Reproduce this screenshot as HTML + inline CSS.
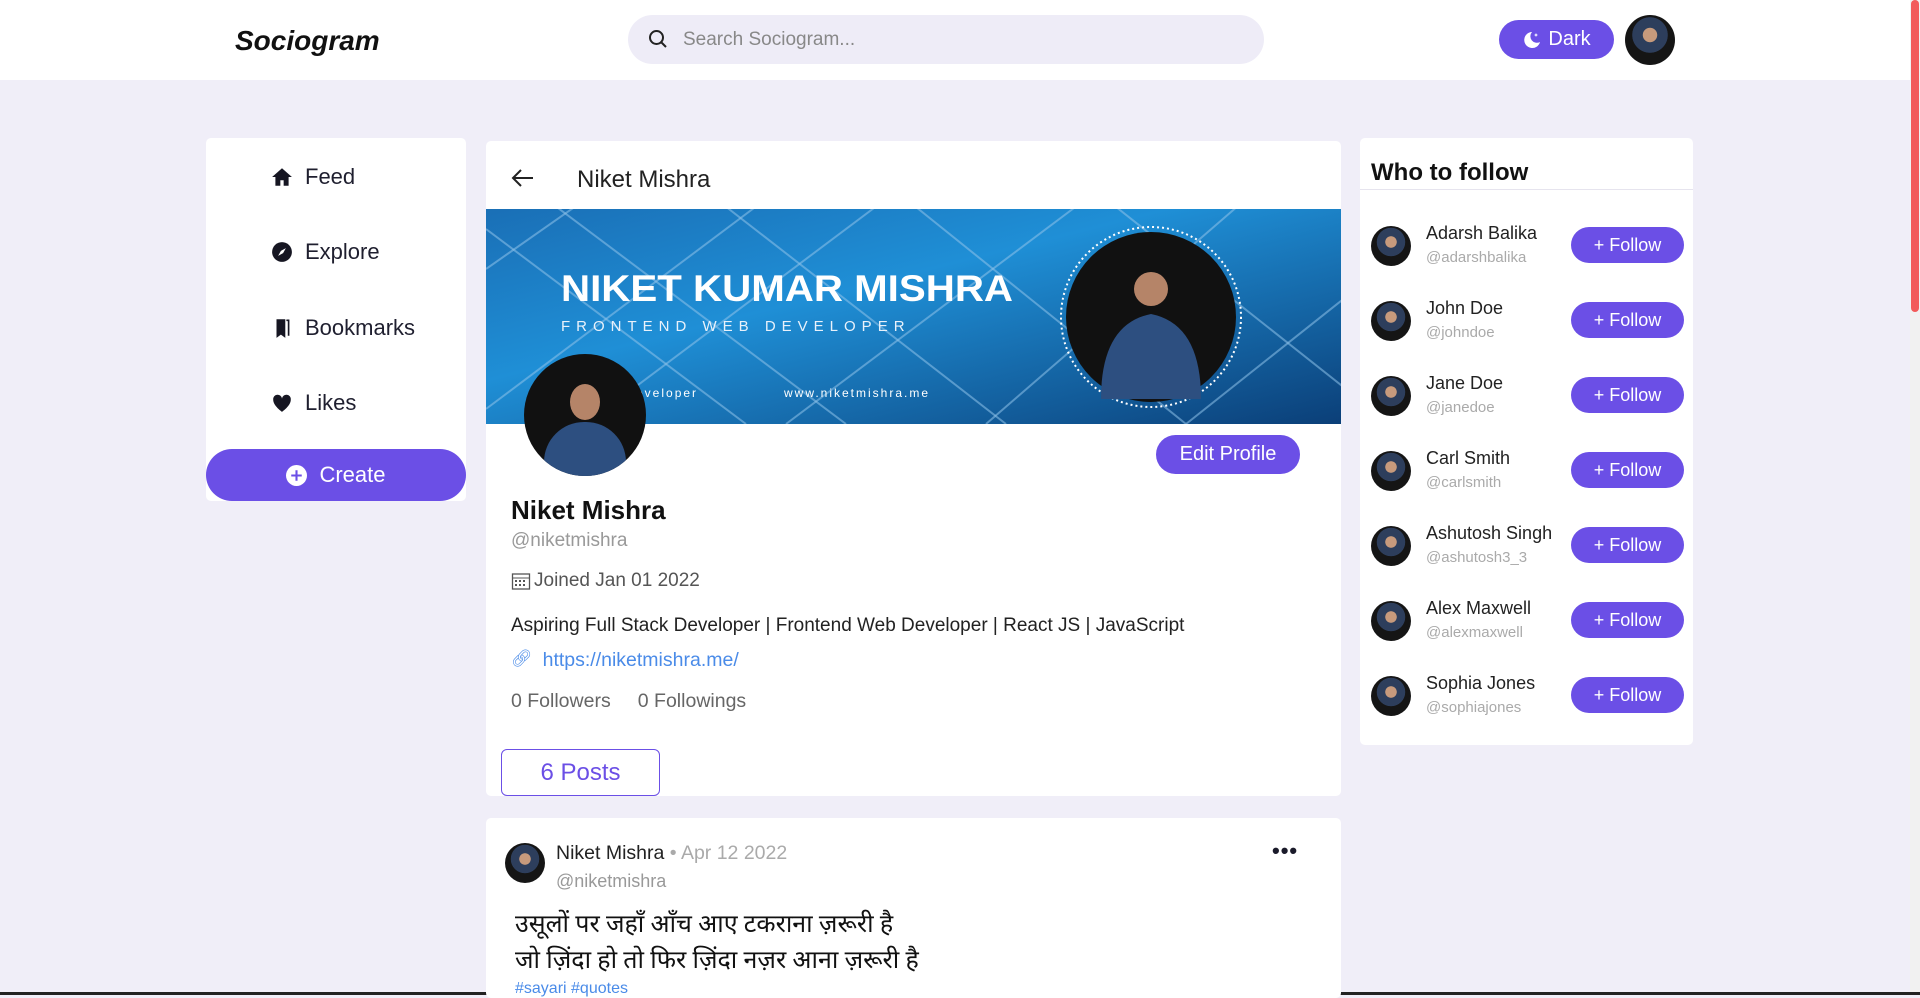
<!DOCTYPE html>
<html><head><meta charset="utf-8"><style>
*{box-sizing:border-box;margin:0;padding:0}
body{width:1920px;height:995px;overflow:hidden;background:#f0eef8;font-family:"Liberation Sans","Noto Sans CJK SC",sans-serif;color:#1a1a2a;position:relative}
.abs{position:absolute}
.hdr{left:0;top:0;width:1910px;height:80px;background:#fff}
.logo{left:235px;top:25px;font-size:28px;font-weight:bold;font-style:italic;color:#111}
.search{left:628px;top:15px;width:636px;height:49px;background:#eeecf7;border-radius:25px}
.search span{position:absolute;left:55px;top:14px;font-size:19px;color:#888}
.btnp{background:#6b4fe6;color:#fff;border-radius:30px;display:flex;align-items:center;justify-content:center}
.card{background:#fff;border-radius:5px}
.nav{left:271px;font-size:22px;color:#1f1f2f;display:flex;align-items:center;gap:12px}
.nav svg{width:22px;height:22px}
.av{border-radius:50%;background:radial-gradient(circle at 50% 40%,#c79a7c 0 18%,#2d3e5c 19% 45%,#151515 46%);}
.grey{color:#999}
.row{left:1371px;width:320px;height:50px}
.row .a{position:absolute;left:0;top:5px;width:40px;height:40px}
.row .n{position:absolute;left:55px;top:2px;font-size:18px;color:#222}
.row .h{position:absolute;left:55px;top:28px;font-size:15px;color:#aaa}
.row .f{position:absolute;left:200px;top:6px;width:113px;height:36px;font-size:18px}
</style></head><body>
<div class="abs hdr"></div>
<div class="abs logo">Sociogram</div>
<div class="abs search"><svg style="position:absolute;left:20px;top:14px" width="20" height="20" viewBox="0 0 20 20"><circle cx="8.5" cy="8.5" r="6.5" fill="none" stroke="#222" stroke-width="2"/><path d="M13.5 13.5L18 18" stroke="#222" stroke-width="2"/></svg><span>Search Sociogram...</span></div>
<div class="abs btnp" style="left:1499px;top:20px;width:115px;height:39px;font-size:20px;gap:6px"><svg width="20" height="20" viewBox="0 0 20 20"><path d="M10 2a8 8 0 1 0 8 10A6.5 6.5 0 0 1 10 2z" fill="#fff"/><path d="M14 3l.6 1.4L16 5l-1.4.6L14 7l-.6-1.4L12 5l1.4-.6z" fill="#fff"/></svg>Dark</div>
<div class="abs av" style="left:1625px;top:15px;width:50px;height:50px"></div>
<div class="abs" style="left:1910px;top:0;width:10px;height:995px;background:#f1f1f1"></div>
<div class="abs" style="left:1911px;top:0;width:8px;height:312px;background:#f25a5a;border-radius:4px"></div>
<div class="abs" style="left:0;top:992px;width:1920px;height:3px;background:#222"></div>

<div class="abs card" style="left:206px;top:138px;width:260px;height:363px"></div>
<div class="abs nav" style="top:164px"><svg viewBox="0 0 20 20"><path d="M10 2L1 10h3v8h4.5v-5h3v5H16v-8h3z" fill="#161622"/></svg><span>Feed</span></div>
<div class="abs nav" style="top:239px"><svg viewBox="0 0 20 20"><circle cx="10" cy="10" r="9" fill="#161622"/><path d="M13.5 6.5L11 11 6.5 13.5 9 9z" fill="#fff"/></svg><span>Explore</span></div>
<div class="abs nav" style="top:315px"><svg viewBox="0 0 20 20"><path d="M5 2h8v17l-4-3-4 3z" fill="#161622"/><path d="M14 3h2v14" stroke="#161622" stroke-width="1.5" fill="none"/></svg><span>Bookmarks</span></div>
<div class="abs nav" style="top:390px"><svg viewBox="0 0 20 20"><path d="M10 18S2 12.5 2 7a4 4 0 0 1 8-1 4 4 0 0 1 8 1c0 5.5-8 11-8 11z" fill="#161622"/></svg><span>Likes</span></div>
<div class="abs btnp" style="left:206px;top:449px;width:260px;height:52px;font-size:22px;gap:12px"><svg width="21" height="21" viewBox="0 0 20 20"><circle cx="10" cy="10" r="10" fill="#fff"/><path d="M10 5v10M5 10h10" stroke="#6b4fe6" stroke-width="2"/></svg>Create</div>

<div class="abs card" style="left:486px;top:141px;width:855px;height:655px"></div>
<svg class="abs" style="left:511px;top:167px" width="24" height="22" viewBox="0 0 24 22"><path d="M22 11H3M10 3l-8 8 8 8" stroke="#222" stroke-width="2" fill="none"/></svg>
<div class="abs" style="left:577px;top:166px;font-size:24px;color:#222">Niket Mishra</div>
<svg class="abs" style="left:486px;top:209px" width="855" height="215" viewBox="0 0 855 215">
<defs><linearGradient id="bg" x1="0" y1="0" x2="1" y2="1"><stop offset="0" stop-color="#1a6fb6"/><stop offset=".4" stop-color="#1f8fd6"/><stop offset="1" stop-color="#0b3f78"/></linearGradient></defs>
<rect width="855" height="215" fill="url(#bg)"/>
<g stroke="#8fc3ea" stroke-opacity=".55" stroke-width="2" fill="none">
<path d="M0 60L100 -10M0 200L280 -10M100 215L400 -10M300 215L600 -10M500 215L760 -10M700 215L870 80"/>
<path d="M0 20L260 215M60 -10L360 215M230 -10L520 215M420 -10L700 215M620 -10L860 180"/></g>
<text x="75" y="92" fill="#fff" font-size="37" font-weight="bold" textLength="452" lengthAdjust="spacingAndGlyphs" font-family="Liberation Sans">NIKET KUMAR MISHRA</text>
<text x="75" y="122" fill="#e8f1fb" font-size="15" letter-spacing="6" font-family="Liberation Sans">FRONTEND WEB DEVELOPER</text>
<text x="150" y="188" fill="#fff" font-size="12" letter-spacing="2" font-family="Liberation Sans">eveloper</text>
<text x="298" y="188" fill="#fff" font-size="12" letter-spacing="2" font-family="Liberation Sans">www.niketmishra.me</text>
<circle cx="665" cy="108" r="90" fill="none" stroke="#fff" stroke-width="2" stroke-dasharray="2 3"/>
<circle cx="665" cy="108" r="85" fill="#111"/>
<circle cx="665" cy="80" r="17" fill="#b58468"/>
<path d="M615 190q0-75 50-85q50 10 50 85z" fill="#2d4f80"/>
</svg>
<div class="abs" style="left:524px;top:354px;width:122px;height:122px;border-radius:50%;background:#111;overflow:hidden"><div style="position:absolute;left:46px;top:30px;width:30px;height:36px;border-radius:50%;background:#b58468"></div><div style="position:absolute;left:20px;top:68px;width:82px;height:70px;border-radius:40px 40px 0 0;background:#2d4f80"></div></div>
<div class="abs btnp" style="left:1156px;top:435px;width:144px;height:39px;font-size:20px">Edit Profile</div>
<div class="abs" style="left:511px;top:495px;font-size:26px;font-weight:bold;color:#111">Niket Mishra</div>
<div class="abs grey" style="left:511px;top:530px;font-size:19px">@niketmishra</div>
<div class="abs" style="left:511px;top:570px;font-size:19px;color:#555;display:flex;align-items:center;gap:3px"><svg width="20" height="20" viewBox="0 0 20 20"><rect x="1.5" y="3" width="17" height="15" fill="none" stroke="#555" stroke-width="1.3"/><path d="M1.5 7h17" stroke="#555"/><g fill="#555"><rect x="4" y="9" width="2" height="2"/><rect x="8" y="9" width="2" height="2"/><rect x="12" y="9" width="2" height="2"/><rect x="4" y="13" width="2" height="2"/><rect x="8" y="13" width="2" height="2"/><rect x="12" y="13" width="2" height="2"/></g></svg>Joined Jan 01 2022</div>
<div class="abs" style="left:511px;top:615px;font-size:19px;color:#222">Aspiring Full Stack Developer | Frontend Web Developer | React JS | JavaScript</div>
<div class="abs" style="left:511px;top:649px;font-size:19.5px;color:#4a8be8;display:flex;gap:10px"><span style="font-size:17px">🔗︎</span>https://niketmishra.me/</div>
<div class="abs" style="left:511px;top:690px;font-size:19.5px;color:#666">0 Followers &nbsp;&nbsp;&nbsp; 0 Followings</div>
<div class="abs" style="left:501px;top:749px;width:159px;height:47px;border:1.5px solid #6b4fe6;border-radius:6px;color:#6b4fe6;font-size:24px;text-align:center;line-height:46px">6 Posts</div>

<div class="abs card" style="left:486px;top:818px;width:855px;height:180px"></div>
<div class="abs av" style="left:505px;top:843px;width:40px;height:40px"></div>
<div class="abs" style="left:556px;top:842px;font-size:19.5px;color:#222">Niket Mishra <span style="color:#aaa">• Apr 12 2022</span></div>
<div class="abs grey" style="left:556px;top:871px;font-size:18px">@niketmishra</div>
<div class="abs" style="left:1272px;top:838px;font-size:22px;font-weight:bold;letter-spacing:1px">•••</div>
<div class="abs" style="left:515px;top:907px;font-size:25px;line-height:36px;color:#111;font-family:'Liberation Serif','Noto Serif CJK SC',serif">उसूलों पर जहाँ आँच आए टकराना ज़रूरी है<br>जो ज़िंदा हो तो फिर ज़िंदा नज़र आना ज़रूरी है</div>
<div class="abs" style="left:515px;top:980px;font-size:16px;color:#4a8be8">#sayari #quotes</div>

<div class="abs card" style="left:1360px;top:138px;width:333px;height:607px"></div>
<div class="abs" style="left:1371px;top:159px;font-size:24px;font-weight:bold;color:#111">Who to follow</div>
<div class="abs" style="left:1360px;top:189px;width:333px;height:1px;background:#e6e4ee"></div>
<div class="abs row" style="top:221px"><div class="a av"></div><div class="n">Adarsh Balika</div><div class="h">@adarshbalika</div><div class="f btnp">+ Follow</div></div>
<div class="abs row" style="top:296px"><div class="a av"></div><div class="n">John Doe</div><div class="h">@johndoe</div><div class="f btnp">+ Follow</div></div>
<div class="abs row" style="top:371px"><div class="a av"></div><div class="n">Jane Doe</div><div class="h">@janedoe</div><div class="f btnp">+ Follow</div></div>
<div class="abs row" style="top:446px"><div class="a av"></div><div class="n">Carl Smith</div><div class="h">@carlsmith</div><div class="f btnp">+ Follow</div></div>
<div class="abs row" style="top:521px"><div class="a av"></div><div class="n">Ashutosh Singh</div><div class="h">@ashutosh3_3</div><div class="f btnp">+ Follow</div></div>
<div class="abs row" style="top:596px"><div class="a av"></div><div class="n">Alex Maxwell</div><div class="h">@alexmaxwell</div><div class="f btnp">+ Follow</div></div>
<div class="abs row" style="top:671px"><div class="a av"></div><div class="n">Sophia Jones</div><div class="h">@sophiajones</div><div class="f btnp">+ Follow</div></div>
</body></html>
